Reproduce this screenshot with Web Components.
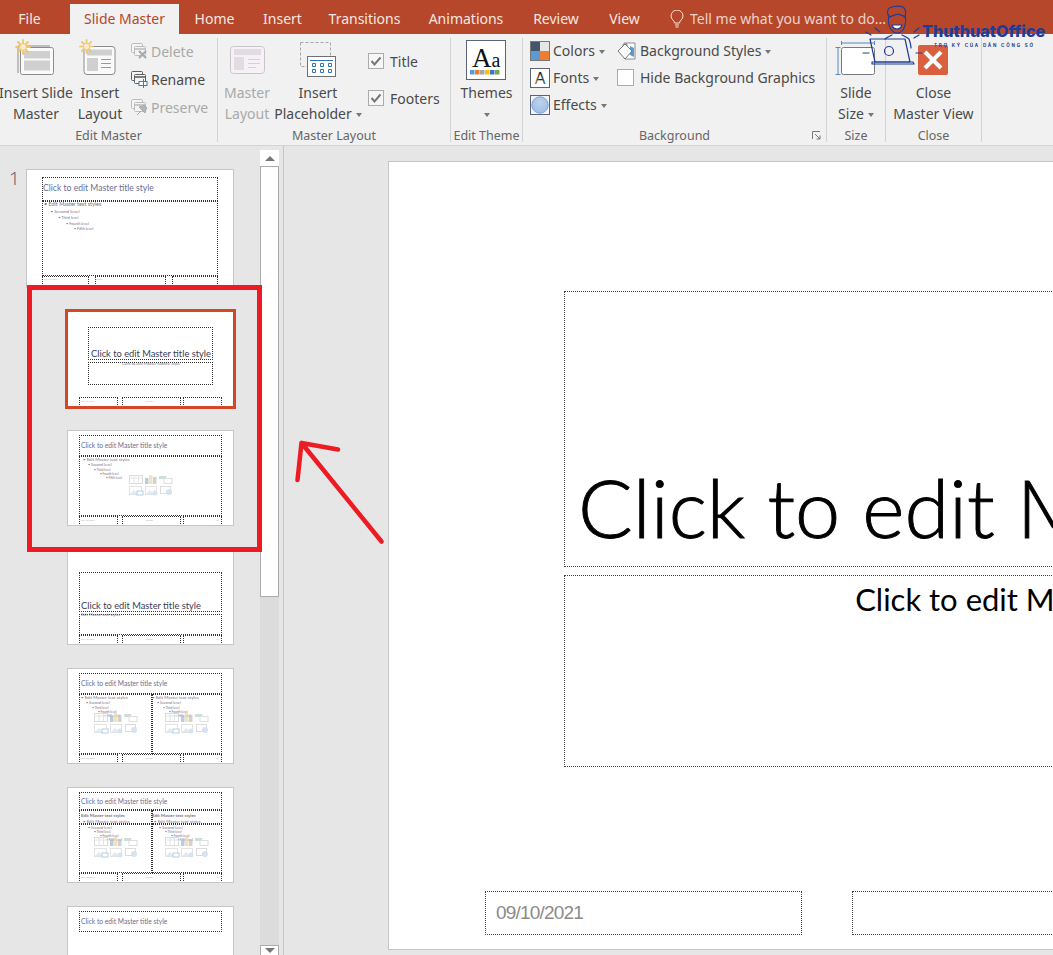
<!DOCTYPE html>
<html lang="en">
<head>
<meta charset="utf-8">
<title>Slide Master</title>
<style>
  html, body { margin: 0; width: 1053px; height: 955px; overflow: hidden; background: #e6e6e6; }
  body { font-family: "Noto Sans", "Open Sans", sans-serif; }
</style>
</head>
<body>
<svg width="0" height="0" style="position:absolute">
  <defs>
    <linearGradient id="fontsA" x1="0" x2="1" y1="0" y2="0">
      <stop offset="0" stop-color="#e8842c"/><stop offset=".5" stop-color="#1a1a1a"/><stop offset="1" stop-color="#2e75b6"/>
    </linearGradient>
    <radialGradient id="effectsBall" cx=".5" cy=".35" r=".7">
      <stop offset="0" stop-color="#bcd2ee"/><stop offset="1" stop-color="#9dbce6"/>
    </radialGradient>
  </defs>
  <symbol id="sun" viewBox="0 0 16 16">
    <g stroke="#f2c46a" stroke-width="1.800" stroke-linecap="round">
      <path d="M8 1v14M1 8h14M3 3l10 10M13 3L3 13"/>
    </g>
    <circle cx="8" cy="8" r="3.400" fill="#fbeecf" stroke="#f2c46a"/>
  </symbol>
  <symbol id="frames" viewBox="0 0 18 18">
    <rect x="1.500" y="1.500" width="11" height="9" rx="1" fill="#f4f4f4" stroke="currentColor"/>
    <rect x="4.500" y="4.500" width="11" height="9" rx="1" fill="#f4f4f4" stroke="currentColor"/>
    <path d="M5 7h10" stroke="currentColor" stroke-width="1.600"/>
  </symbol>
</svg>

<ppt-app>
  <ppt-tabbar>
    <ppt-tab style="width:59px;margin-right:11px">File</ppt-tab>
    <ppt-tab active style="width:109px">Slide Master</ppt-tab>
    <ppt-tab style="width:71px">Home</ppt-tab>
    <ppt-tab style="width:65px">Insert</ppt-tab>
    <ppt-tab style="width:99px">Transitions</ppt-tab>
    <ppt-tab style="width:104px">Animations</ppt-tab>
    <ppt-tab style="width:76px">Review</ppt-tab>
    <ppt-tab style="width:61px">View</ppt-tab>
    <tell-me>Tell me what you want to do...</tell-me>
  </ppt-tabbar>

  <ppt-ribbon>
    <ribbon-group label="Edit Master" style="width:218px">
      <big-button style="width:72px">
        <svg slot="icon" viewBox="0 38 72 44" width="72" height="44">
          <path d="M18 73V46h32" fill="none" stroke="#8c8c8c"/>
          <rect x="20.500" y="47.500" width="33" height="27" rx="2" fill="#fafafa" stroke="#8c8c8c"/>
          <rect x="24" y="51" width="26" height="7.500" fill="#cfcfcf"/>
          <rect x="24" y="60.500" width="26" height="10" fill="#cfcfcf"/>
          <use href="#sun" x="15" y="39" width="16" height="16"/>
        </svg>
        Insert Slide<br>Master
      </big-button>
      <big-button style="width:56px">
        <svg slot="icon" viewBox="72 38 56 44" width="56" height="44">
          <rect x="84" y="46.500" width="31" height="28" rx="3" fill="#fafafa" stroke="#8c8c8c"/>
          <rect x="87" y="49.500" width="25" height="6" fill="#cfcfcf"/>
          <rect x="87" y="58" width="11" height="13" fill="#cfcfcf"/>
          <path d="M101 59.500h10M101 63.500h10M101 67.500h10" stroke="#9a9a9a"/>
          <use href="#sun" x="79" y="39" width="15" height="15"/>
        </svg>
        Insert<br>Layout
      </big-button>
      <button-stack style="margin:-1px 0 0 2px">
        <small-button disabled>
          <svg slot="icon" width="18" height="18" style="color:#bdbdbd">
            <use href="#frames"/>
            <path d="M9 9l7 7M16 9l-7 7" stroke="#a8a8a8" stroke-width="2"/>
          </svg>Delete</small-button>
        <small-button>
          <svg slot="icon" width="18" height="18" style="color:#5f5f5f">
            <use href="#frames"/>
            <rect x="9" y="11.500" width="8" height="4" fill="#fff" stroke="#3f7cb8"/>
            <path d="M13.500 9v9" stroke="#3f7cb8"/>
          </svg>Rename</small-button>
        <small-button disabled>
          <svg slot="icon" width="18" height="18" style="color:#bdbdbd">
            <use href="#frames"/>
            <path d="M7 17l4-4M9 9l6 6 1-4 1-1-3-3-1 1z" fill="#b5b5b5" stroke="#a8a8a8"/>
          </svg>Preserve</small-button>
      </button-stack>
    </ribbon-group>

    <ribbon-group label="Master Layout" style="width:233px">
      <big-button disabled style="width:56px;margin-left:1px">
        <svg slot="icon" viewBox="219 38 56 44" width="56" height="44">
          <rect x="230.500" y="46.500" width="34" height="27" rx="3" fill="#f5f1f5" stroke="#cbc5cb"/>
          <rect x="234" y="49" width="27" height="6" fill="#e1dce1"/>
          <rect x="234" y="57" width="10" height="13" fill="#e1dce1"/>
          <path d="M248 59.500h12M248 63.500h12M248 67.500h8" stroke="#d6d0d6"/>
        </svg>
        Master<br>Layout
      </big-button>
      <big-button style="width:88px;margin-left:-1px">
        <svg slot="icon" viewBox="274 38 88 44" width="88" height="44">
          <rect x="300.500" y="42.500" width="30" height="24" fill="none" stroke="#a6a6a6" stroke-dasharray="3 2"/>
          <rect x="307.500" y="56.500" width="28" height="20" fill="#fff" stroke="#6f6f6f"/>
          <path d="M310 60.500h23" stroke="#2e75b6"/>
          <path d="M312.500 63.500h3v3h-3zM320.500 63.500h3v3h-3zM328.500 63.500h3v3h-3zM312.500 69.500h3v3h-3zM320.500 69.500h3v3h-3zM328.500 69.500h3v3h-3z" fill="none" stroke="#2e75b6"/>
        </svg>
        Insert<br>Placeholder<drop-caret></drop-caret>
      </big-button>
      <check-stack style="margin-left:6px">
        <check-box checked>Title</check-box>
        <check-box checked>Footers</check-box>
      </check-stack>
    </ribbon-group>

    <ribbon-group label="Edit Theme" style="width:72px">
      <big-button style="width:71px">
        <svg slot="icon" viewBox="451 38 71 44" width="71" height="44">
          <rect x="466.500" y="40.500" width="39" height="39" fill="#fff" stroke="#5a6378"/>
          <text x="472" y="66.500" font-family="Liberation Serif, serif" font-size="27" fill="#111">A<tspan font-size="20">a</tspan></text>
          <rect x="470" y="70" width="4.500" height="4.500" fill="#5b9bd5"/>
          <rect x="475" y="70" width="4.500" height="4.500" fill="#ed7d31"/>
          <rect x="480" y="70" width="4.500" height="4.500" fill="#a5a5a5"/>
          <rect x="485" y="70" width="4.500" height="4.500" fill="#ffc000"/>
          <rect x="490" y="70" width="4.500" height="4.500" fill="#4472c4"/>
          <rect x="495" y="70" width="4.500" height="4.500" fill="#70ad47"/>
        </svg>
        Themes<br><drop-caret style="margin:0"></drop-caret>
      </big-button>
    </ribbon-group>

    <ribbon-group label="Background" launcher style="width:304px">
      <button-stack style="width:87px;margin:-1px 0 0 7px;--row:27px">
        <small-button caret>
          <svg slot="icon" width="20" height="20">
            <rect x=".5" y=".5" width="19" height="19" fill="none" stroke="#777"/>
            <rect x="1" y="1" width="9" height="9" fill="#44546a"/>
            <rect x="10" y="1" width="9" height="9" fill="#e7e6e6"/>
            <rect x="1" y="10" width="9" height="9" fill="#5b9bd5"/>
            <rect x="10" y="10" width="9" height="9" fill="#ed7d31"/>
          </svg>Colors</small-button>
        <small-button caret>
          <svg slot="icon" width="20" height="20">
            <rect x=".5" y=".5" width="19" height="19" fill="#fff" stroke="#5a6378"/>
            <text x="10" y="16" text-anchor="middle" font-family="Liberation Sans, sans-serif" font-size="16" fill="url(#fontsA)">A</text>
          </svg>Fonts</small-button>
        <small-button caret>
          <svg slot="icon" width="20" height="20">
            <rect x=".5" y=".5" width="19" height="19" fill="#f4f4f4" stroke="#5a6378"/>
            <circle cx="10" cy="10" r="8.200" fill="url(#effectsBall)" stroke="#7fa4d6"/>
          </svg>Effects</small-button>
      </button-stack>
      <button-stack style="margin-top:-1px;--row:27px">
        <small-button caret>
          <svg slot="icon" width="20" height="20">
            <path d="M9 2h9v16H8z" fill="#fff" stroke="#8c8c8c"/>
            <path d="M13 5l4 2v9l-4-2z" fill="#5b9bd5"/>
            <path d="M1 10l7-7 7 7-7 8z" fill="#fafafa" stroke="#777"/>
            <path d="M6 5c0-4 4-4 4 0" fill="none" stroke="#777"/>
          </svg>Background Styles</small-button>
        <small-button>
          <svg slot="icon" width="20" height="20">
            <rect x=".5" y="1.500" width="16" height="16" fill="#fff" stroke="#ababab"/>
          </svg>Hide Background Graphics</small-button>
      </button-stack>
    </ribbon-group>

    <ribbon-group label="Size" style="width:59px">
      <big-button style="width:58px">
        <svg slot="icon" viewBox="827 38 58 44" width="58" height="44">
          <rect x="841.500" y="47.500" width="33" height="27" rx="2" fill="#fff" stroke="#7a7a7a"/>
          <path d="M841.500 41v4M874.500 41v4M841.500 43h33M835.500 47.500h5M835.500 74.500h5M838 47.500v27" stroke="#5b86c4" fill="none"/>
        </svg>
        Slide<br>Size<drop-caret></drop-caret>
      </big-button>
    </ribbon-group>

    <ribbon-group label="Close" style="width:96px">
      <big-button style="width:95px">
        <svg slot="icon" viewBox="886 38 95 44" width="95" height="44">
          <rect x="918" y="45" width="30" height="30" rx="2" fill="#d9603f"/>
          <path d="M925 52l16 16M941 52l-16 16" stroke="#fff" stroke-width="4"/>
        </svg>
        Close<br>Master View
      </big-button>
    </ribbon-group>
  </ppt-ribbon>

  <ppt-main>
    <thumb-panel>
      <slide-thumb layout="master" number="1"></slide-thumb>
      <slide-thumb layout="cover" selected></slide-thumb>
      <slide-thumb layout="content"></slide-thumb>
      <slide-thumb layout="section"></slide-thumb>
      <slide-thumb layout="two"></slide-thumb>
      <slide-thumb layout="compare"></slide-thumb>
      <slide-thumb layout="titleonly"></slide-thumb>
    </thumb-panel>
    <slide-stage>
      <slide-canvas></slide-canvas>
    </slide-stage>
  </ppt-main>

  <red-annotation></red-annotation>
  <watermark-logo></watermark-logo>
</ppt-app>

<script>
class PptApp extends HTMLElement {
  constructor() {
    super();
    this.attachShadow({ mode: 'open' }).innerHTML = `
      <style>:host { display: flex; flex-direction: column; position: relative; width: 1053px; height: 955px; overflow: hidden; background: #e6e6e6; }</style>
      <slot></slot>`;
  }
}

class PptTabbar extends HTMLElement {
  constructor() {
    super();
    this.attachShadow({ mode: 'open' }).innerHTML = `
      <style>
        :host { display: flex; align-items: flex-end; flex: none; height: 34px; background: #b7472a; }
      </style>
      <slot></slot>`;
  }
}

class PptTab extends HTMLElement {
  constructor() {
    super();
    this.attachShadow({ mode: 'open' }).innerHTML = `
      <style>
        :host { display: flex; align-items: center; justify-content: center; flex: none; height: 30px; padding-bottom: 1px; box-sizing: border-box; font-size: 14px; color: #f6e7e2; }
        :host([active]) { background: #f1f1f1; color: #b7472a; }
      </style>
      <slot></slot>`;
  }
}

class TellMe extends HTMLElement {
  constructor() {
    super();
    this.attachShadow({ mode: 'open' }).innerHTML = `
      <style>
        :host { display: flex; align-items: center; gap: 6px; height: 30px; padding: 0 0 1px 15px; box-sizing: border-box; font-size: 14px; color: #ecd3cb; white-space: nowrap; }
        svg { flex: none; }
      </style>
      <svg width="14" height="18" viewBox="0 0 14 18" fill="none" stroke="#f6e7e2">
        <path d="M4.500 13c0-2.500-3.500-3.500-3.500-7a6 6 0 0 1 12 0c0 3.500-3.500 4.500-3.500 7z"/>
        <path d="M5 15h4M5.500 17h3"/>
      </svg>
      <slot></slot>`;
  }
}

class PptRibbon extends HTMLElement {
  constructor() {
    super();
    this.attachShadow({ mode: 'open' }).innerHTML = `
      <style>
        :host { display: flex; flex: none; height: 112px; padding: 4px 0 3px; box-sizing: border-box; background: #f1f1f1; border-bottom: 1px solid #d4d4d4; font-size: 14px; color: #4a4a4a; }
      </style>
      <slot></slot>`;
  }
}

class RibbonGroup extends HTMLElement {
  constructor() {
    super();
    this.attachShadow({ mode: 'open' });
  }

  connectedCallback() {
    const launcher = this.hasAttribute('launcher') ? `
      <svg class="launcher" width="9" height="9" fill="none" stroke="#777">
        <path d="M.5 8V.5H8M3 3l5 5M8 4.500V8H4.500"/>
      </svg>` : '';
    this.shadowRoot.innerHTML = `
      <style>
        :host { display: flex; flex-direction: column; flex: none; box-sizing: border-box; border-right: 1px solid #d2d2d2; position: relative; }
        .content { display: flex; align-items: flex-start; height: 88px; }
        .label { height: 16px; line-height: 20px; text-align: center; font-size: 12.500px; color: #666; }
        .launcher { position: absolute; right: 5px; bottom: 2px; }
      </style>
      <div class="content"><slot></slot></div>
      <div class="label">${this.getAttribute('label') || ''}</div>
      ${launcher}`;
  }
}

class BigButton extends HTMLElement {
  constructor() {
    super();
    this.attachShadow({ mode: 'open' }).innerHTML = `
      <style>
        :host { display: block; flex: none; text-align: center; line-height: 21px; white-space: nowrap; }
        :host([disabled]) { color: #a9a9a9; }
        .icon { display: block; height: 43.500px; }
        .text { display: flex; justify-content: center; }
      </style>
      <div class="icon"><slot name="icon"></slot></div>
      <div class="text"><div><slot></slot></div></div>`;
  }
}

class DropCaret extends HTMLElement {
  constructor() {
    super();
    this.attachShadow({ mode: 'open' }).innerHTML = `
      <style>
        :host { display: inline-block; width: 0; height: 0; margin-left: 4px; vertical-align: middle; border: 3.500px solid transparent; border-top: 4px solid #777; border-bottom: 0; }
      </style>`;
  }
}

class ButtonStack extends HTMLElement {
  constructor() {
    super();
    this.attachShadow({ mode: 'open' }).innerHTML = `
      <style>:host { display: flex; flex-direction: column; flex: none; }</style>
      <slot></slot>`;
  }
}

class SmallButton extends HTMLElement {
  constructor() {
    super();
    this.attachShadow({ mode: 'open' });
  }

  connectedCallback() {
    const caret = this.hasAttribute('caret') ? '<drop-caret></drop-caret>' : '';
    this.shadowRoot.innerHTML = `
      <style>
        :host { display: flex; align-items: center; gap: 3px; height: var(--row, 28px); white-space: nowrap; }
        :host([disabled]) { color: #a9a9a9; }
        .icon { display: flex; flex: none; }
      </style>
      <span class="icon"><slot name="icon"></slot></span>
      <span><slot></slot>${caret}</span>`;
  }
}

class CheckStack extends HTMLElement {
  constructor() {
    super();
    this.attachShadow({ mode: 'open' }).innerHTML = `
      <style>:host { display: flex; flex-direction: column; gap: 13px; padding-top: 11px; flex: none; }</style>
      <slot></slot>`;
  }
}

class CheckBox extends HTMLElement {
  constructor() {
    super();
    this.attachShadow({ mode: 'open' });
  }

  connectedCallback() {
    const tick = this.hasAttribute('checked')
      ? '<path d="M3.500 8l3 3.500 6-7" fill="none" stroke="#777" stroke-width="2"/>' : '';
    this.shadowRoot.innerHTML = `
      <style>
        :host { display: flex; align-items: center; gap: 6px; height: 24px; }
      </style>
      <svg width="16" height="16"><rect x=".5" y=".5" width="15" height="15" fill="#f6f6f6" stroke="#ababab"/>${tick}</svg>
      <span><slot></slot></span>`;
  }
}

class PptMain extends HTMLElement {
  constructor() {
    super();
    this.attachShadow({ mode: 'open' }).innerHTML = `
      <style>:host { display: flex; flex: 1; min-height: 0; }</style>
      <slot></slot>`;
  }
}

class ThumbPanel extends HTMLElement {
  constructor() {
    super();
    this.attachShadow({ mode: 'open' }).innerHTML = `
      <style>
        :host { display: flex; flex: none; width: 284px; box-sizing: border-box; border-right: 1px solid #c6c6c6; overflow: hidden; }
        .list { display: flex; flex-direction: column; gap: 23px; width: 260px; flex: none; padding-top: 23px; box-sizing: border-box; }
        .bar { display: flex; flex-direction: column; width: 19px; flex: none; margin-top: 4px; background: #dcdcdc; }
        .btn { display: flex; align-items: center; justify-content: center; flex: none; height: 17px; background: #fff; box-sizing: border-box; }
        .btn.up { border-bottom: 1px solid #ababab; }
        .btn.down { border: 1px solid #ababab; margin-top: 348px; height: 20px; padding-bottom: 10px; }
        .handle { height: 430px; flex: none; background: #fff; box-sizing: border-box; border: 1px solid #ababab; border-top: 0; }
        .arrow { width: 0; height: 0; border: 5px solid transparent; }
        .up .arrow { border-bottom: 5px solid #777; border-top: 0; }
        .down .arrow { border-top: 5px solid #777; border-bottom: 0; }
      </style>
      <div class="list"><slot></slot></div>
      <div class="bar">
        <div class="btn up"><div class="arrow"></div></div>
        <div class="handle"></div>
        <div class="btn down"><div class="arrow"></div></div>
      </div>`;
  }
}

// pale icon cluster of the content placeholder, x/y are thumb coordinates
function contentIcons(x, y) {
  return `
    <svg class="ph-icons" style="left:${x}px;top:${y}px" width="44" height="21" viewBox="0 0 44 21">
      <rect x=".5" y=".5" width="13" height="8" fill="#fff" stroke="#cfcfcf"/>
      <path d="M.5 3h13M5 .5v8M9.500 .5v8" stroke="#dcdcdc"/>
      <rect x="16" y="3" width="3.500" height="6" fill="#9dbfe0"/><rect x="20" y="0" width="3.500" height="9" fill="#f3d9a4"/><rect x="24" y="2" width="3.500" height="7" fill="#c4c4c4"/>
      <path d="M30 1h8l-2 3h-6z" fill="#bcd6cc"/><rect x="35" y="3.500" width="8" height="5" fill="#fff" stroke="#d4d4d4"/>
      <rect x=".5" y="11.500" width="12" height="8" fill="#fff" stroke="#dadada"/><path d="M1 19l4-4 4 4z" fill="#d6e4f2"/><rect x="8" y="16" width="6" height="4" fill="#fff" stroke="#9dbfe0"/>
      <rect x="16.500" y="11.500" width="11" height="8" fill="#fff" stroke="#dadada"/><path d="M17 19l4-4 4 4z" fill="#d6e4f2"/><circle cx="26" cy="18" r="2.500" fill="#c7daee"/>
      <rect x="31.500" y="11.500" width="10" height="7" fill="#fff" stroke="#cfcfcf"/><circle cx="40" cy="17" r="3" fill="#c7daee"/>
    </svg>`;
}

const BULLETS = [
  [0, 0, 1, 'Edit Master text styles'],
  [5, 5.600, .85, 'Second level'],
  [11, 11, .7, 'Third level'],
  [17, 15, .7, 'Fourth level'],
  [23, 19, .7, 'Fifth level']
];

function bodyLines(x, y, size, stretch = 1) {
  return BULLETS.map(([dx, dy, k, t]) =>
    `<span class="t body" style="left:${x + dx * stretch}px;top:${y + dy * stretch}px;font-size:${size * k}px">• ${t}</span>`).join('');
}

const THUMB_FOOT = [[12, 86, 39, 14], [54.500, 86, 59, 14], [116, 86, 39, 14]];
const TITLE_TEXT = 'Click to edit Master title style';

function smallTitle(top) {
  return `<span class="t title" style="left:14px;top:${top}px;font-size:6.700px">${TITLE_TEXT}</span>`;
}

function footText(list) {
  const [a, b, c] = list;
  return `<span class="t foot" style="left:${a[0] + 2}px;top:${a[1] + 3}px">09/10/2021</span>
    <span class="t foot" style="left:${b[0] + 24}px;top:${b[1] + 3}px">Footer</span>
    <span class="t foot" style="left:${c[0] + 33}px;top:${c[1] + 3}px">‹#›</span>`;
}

const THUMB_LAYOUTS = {
  master: {
    boxes: [[16, 7.500, 176, 24], [16, 32, 176, 75], [16, 107, 47, 14], [69, 107, 71, 14], [146, 107, 46, 14]],
    html: `<span class="t title" style="left:17px;top:15px;font-size:8.600px">${TITLE_TEXT}</span>`
      + bodyLines(18, 33, 5.400, 1.300)
      + footText([[16, 106], [45, 106], [125, 106]])
  },
  cover: {
    boxes: [[21, 16, 125, 33], [21, 51, 125, 23], ...THUMB_FOOT],
    html: `<span class="t dark" style="left:24px;top:38px;font-size:9.300px">${TITLE_TEXT}</span>
      <span class="t body" style="left:55px;top:51px;font-size:4px">Click to edit Master subtitle style</span>` + footText(THUMB_FOOT)
  },
  content: {
    boxes: [[12, 5, 143, 20.500], [12, 25.500, 143, 60.500], ...THUMB_FOOT],
    html: smallTitle(12) + bodyLines(16, 27.500, 4.400) + contentIcons(62, 45) + footText(THUMB_FOOT)
  },
  section: {
    boxes: [[12, 23, 143, 39.500], [12, 64.500, 143, 21.500], ...THUMB_FOOT],
    html: `<span class="t dark" style="left:14px;top:52px;font-size:9.300px">${TITLE_TEXT}</span>
      <span class="t body" style="left:14px;top:64px;font-size:4px">Edit Master text styles</span>` + footText(THUMB_FOOT)
  },
  two: {
    boxes: [[12, 5, 143, 20.500], [12, 25.500, 72.500, 60.500], [84.500, 25.500, 70.500, 60.500], ...THUMB_FOOT],
    html: smallTitle(12) + bodyLines(14, 27.500, 4.400) + bodyLines(85, 27.500, 4.400)
      + contentIcons(27, 45) + contentIcons(98, 45) + footText(THUMB_FOOT)
  },
  compare: {
    boxes: [[12, 5, 143, 18], [12, 23, 72.500, 14], [84.500, 23, 70.500, 14], [12, 37, 72.500, 49], [84.500, 37, 70.500, 49], ...THUMB_FOOT],
    html: smallTitle(11)
      + `<span class="t body" style="left:14px;top:27px;font-size:4.400px;font-weight:700">Edit Master text styles</span>
         <span class="t body" style="left:85px;top:27px;font-size:4.400px;font-weight:700">Edit Master text styles</span>`
      + bodyLines(16, 33, 4.400) + bodyLines(87, 33, 4.400)
      + contentIcons(27, 50) + contentIcons(98, 50) + footText(THUMB_FOOT)
  },
  titleonly: {
    boxes: [[12, 5, 143, 20.500]],
    html: smallTitle(12)
  }
};

class SlideThumb extends HTMLElement {
  constructor() {
    super();
    this.attachShadow({ mode: 'open' });
  }

  connectedCallback() {
    const layout = THUMB_LAYOUTS[this.getAttribute('layout')];
    const number = this.getAttribute('number');
    const boxes = layout.boxes.map(([x, y, w, h]) =>
      `<div class="ph" style="left:${x}px;top:${y}px;width:${w}px;height:${h}px"></div>`).join('');
    this.shadowRoot.innerHTML = `
      <style>
        :host { display: block; flex: none; position: relative; width: 167px; height: 96px; margin-left: 67px; box-sizing: border-box; background: #fff; border: 1px solid #c6c6c6; font-family: "Lato", sans-serif; }
        :host([layout="master"]) { width: 208px; height: 119px; margin-left: 26px; }
        :host([selected]) { width: 171px; height: 100px; margin: -2px 0 -2px 65px; border: 3px solid #d24726; }
        .clip { position: absolute; inset: 0; overflow: hidden; }
        .sheet { position: absolute; left: -1px; top: -1px; right: 0; bottom: 0; }
        .ph { position: absolute; box-sizing: border-box; border: 1px dotted #333; }
        .t { position: absolute; line-height: 1; white-space: nowrap; }
        .title { color: #6d6d95; }
        .dark { color: #3b3b55; }
        .body { color: #77707f; }
        .foot { color: #b0b0b0; font-size: 2.600px; }
        .ph-icons { position: absolute; opacity: .75; }
        .num { position: absolute; left: -18px; top: -5px; font: 300 19px "Noto Sans", sans-serif; color: #666; }
      </style>
      ${number ? `<span class="num">${number}</span>` : ''}
      <div class="clip"><div class="sheet">${boxes}${layout.html}</div></div>`;
  }
}

class SlideStage extends HTMLElement {
  constructor() {
    super();
    this.attachShadow({ mode: 'open' }).innerHTML = `
      <style>:host { display: block; flex: 1; min-width: 0; padding: 15px 0 0 104px; overflow: hidden; }</style>
      <slot></slot>`;
  }
}

class SlideCanvas extends HTMLElement {
  constructor() {
    super();
    this.attachShadow({ mode: 'open' }).innerHTML = `
      <style>
        :host { display: block; position: relative; width: 1400px; height: 789px; box-sizing: border-box; background: #fff; border: 1px solid #c6c6c6; }
        .ph { position: absolute; box-sizing: border-box; border: 1px dotted #444; }
        .title { left: 175px; top: 129px; width: 1050px; height: 276px; display: flex; align-items: flex-end; padding: 0 0 11px 13px; font: 300 81px/1.200 "Lato", sans-serif; -webkit-text-stroke: .9px #000; color: #000; white-space: nowrap; }
        .sub { left: 175px; top: 413px; width: 1050px; height: 192px; padding: 1px 20px 0 0; text-align: center; font: 400 31px/1.450 "Lato", sans-serif; color: #000; white-space: nowrap; }
        .date { left: 96px; top: 729px; width: 317px; height: 44px; padding: 9px 0 0 10px; font: 19px/24px "Liberation Sans", sans-serif; letter-spacing: -.8px; color: #8b8b8b; }
        .foot { left: 463px; top: 729px; width: 474px; height: 44px; }
      </style>
      <div class="ph title">Click to edit Master title style</div>
      <div class="ph sub">Click to edit Master subtitle style</div>
      <div class="ph date">09/10/2021</div>
      <div class="ph foot"></div>`;
  }
}

// red box and arrow drawn over the screenshot
class RedAnnotation extends HTMLElement {
  constructor() {
    super();
    this.attachShadow({ mode: 'open' }).innerHTML = `
      <style>
        :host { display: block; position: absolute; inset: 0; pointer-events: none; }
        .box { position: absolute; left: 27px; top: 285px; width: 235px; height: 267px; box-sizing: border-box; border: 5px solid #ed1c24; }
        svg { position: absolute; left: 0; top: 0; }
      </style>
      <div class="box"></div>
      <svg width="1053" height="955" fill="none" stroke="#ed1c24" stroke-width="4.500" stroke-linecap="round">
        <path d="M381.500 541.500L301.500 443M338 449.500l-36.500-6.500M297.500 480l4-37"/>
      </svg>`;
  }
}

class WatermarkLogo extends HTMLElement {
  constructor() {
    super();
    this.attachShadow({ mode: 'open' }).innerHTML = `
      <style>
        :host { display: block; position: absolute; left: 860px; top: 0; width: 193px; height: 70px; pointer-events: none; color: #1f3c96; }
        svg { position: absolute; left: 0; top: 0; }
        .name { position: absolute; left: 62px; top: 21px; font: 800 16.200px/20px "Inter", sans-serif; white-space: nowrap; }
        .tag { position: absolute; left: 74px; top: 43px; font: 700 4.500px/6px "Inter", sans-serif; letter-spacing: 1.800px; white-space: nowrap; }
      </style>
      <svg width="70" height="70" viewBox="860 0 70 70" fill="none" stroke="#1f3c96" stroke-width="1.200" stroke-linecap="round" stroke-linejoin="round">
        <path d="M890 17c-4-3-3-9 2-10 4-1 8-1 11 0 3 2 3 6 2 10-2-2-5-2-7-3-2 1-5 1-8 3z"/>
        <path d="M889 16c-1 3-1 6 0 9 1 5 5 8 8 8 4 0 7-3 8-8 1-3 1-6 0-9"/>
        <path d="M892 25c1 3 3 4 5 4s4-1 5-4z" fill="#fff"/>
        <path d="M885 39c2-2 5-3 7-4M902 35c2 1 5 2 7 4 1 3 2 6 2 9"/>
        <path d="M870 39h35l5 23H875z"/>
        <path d="M872 62h41l1 2h-42z"/>
        <circle cx="889" cy="51" r="4.500"/>
        <path d="M871 35l-5-3M880 32l-5-4M919 35l-5 3M919 28l-5 4M863 53h6M916 53h6"/>
      </svg>
      <div class="name">ThuthuatOffice</div>
      <div class="tag">TRỢ KÝ CỦA DÂN CÔNG SỞ</div>`;
  }
}

customElements.define('ppt-app', PptApp);
customElements.define('ppt-tabbar', PptTabbar);
customElements.define('ppt-tab', PptTab);
customElements.define('tell-me', TellMe);
customElements.define('ppt-ribbon', PptRibbon);
customElements.define('ribbon-group', RibbonGroup);
customElements.define('big-button', BigButton);
customElements.define('drop-caret', DropCaret);
customElements.define('button-stack', ButtonStack);
customElements.define('small-button', SmallButton);
customElements.define('check-stack', CheckStack);
customElements.define('check-box', CheckBox);
customElements.define('ppt-main', PptMain);
customElements.define('thumb-panel', ThumbPanel);
customElements.define('slide-thumb', SlideThumb);
customElements.define('slide-stage', SlideStage);
customElements.define('slide-canvas', SlideCanvas);
customElements.define('red-annotation', RedAnnotation);
customElements.define('watermark-logo', WatermarkLogo);
</script>
</body>
</html>
